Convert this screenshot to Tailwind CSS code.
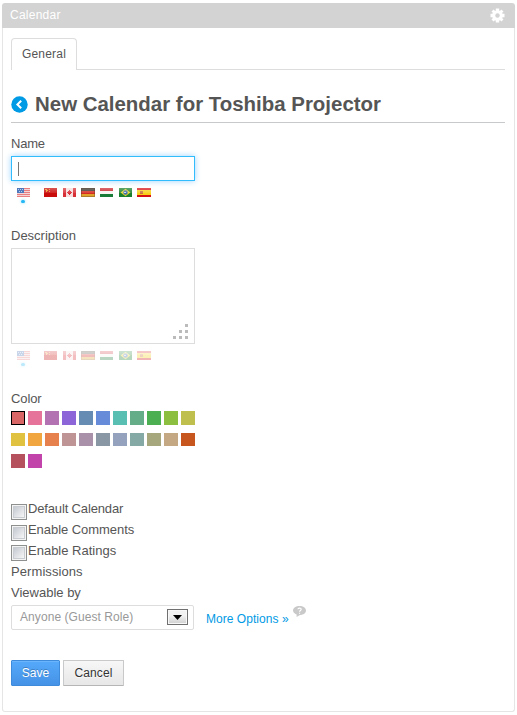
<!DOCTYPE html>
<html lang="en">
<head>
<meta charset="utf-8">
<title>Calendar</title>
<script src="https://cdn.jsdelivr.net/npm/@tailwindcss/browser@4"></script>
</head>
<body class="bg-white font-['Liberation_Sans',Arial,sans-serif] text-[13px] text-[#555]">
<svg width="0" height="0" class="absolute">
  <defs>
    <linearGradient id="gloss" x1="0" y1="0" x2="0" y2="1"><stop offset="0" stop-color="#fff" stop-opacity=".3"/><stop offset=".5" stop-color="#fff" stop-opacity=".12"/><stop offset=".5" stop-color="#fff" stop-opacity="0"/></linearGradient>
    <symbol id="us" viewBox="0 0 13 9"><path fill="#f4d6d8" d="M0 0h13v9H0z"/><path fill="#e87e80" d="M0 0h13v1H0zM0 2h13v1H0zM0 4h13v1H0zM0 6h13v1H0zM0 8h13v1H0z"/><path fill="#5079bd" d="M0 0h7v5H0z"/><path fill="#b9cfee" d="M1 1h1v1H1zM3 1h1v1H3zM5 1h1v1H5zM2 3h1v1H2zM4 3h1v1H4z"/></symbol>
    <symbol id="cn" viewBox="0 0 13 9"><path fill="#c90b09" d="M0 0h13v9H0z"/><path fill="#f0931d" d="M1 1h2v1h1v1H3v1H2V2H1zM5 1h1v1H5zM5 3h1v1H5z"/><path fill="url(#gloss)" d="M0 0h13v9H0z"/></symbol>
    <symbol id="ca" viewBox="0 0 13 9"><path fill="#f6dede" d="M0 0h13v9H0z"/><path fill="#d82e36" d="M0 0h3v9H0zM10 0h3v9h-3zM6 2h1v1h1v1h1v1H8v1H7v1H6V6H5V5H4V4h1V3h1z"/><path fill="url(#gloss)" d="M0 0h13v9H0z"/></symbol>
    <symbol id="de" viewBox="0 0 14 9"><path fill="#3a3429" d="M0 0h14v3H0z"/><path fill="#d52b20" d="M0 3h14v3H0z"/><path fill="#dfa32b" d="M0 6h14v3H0z"/><path fill="url(#gloss)" d="M0 0h14v9H0z"/><path fill="none" stroke="#54382b" stroke-opacity=".35" d="M.5.5h13v8H.5z"/></symbol>
    <symbol id="hu" viewBox="0 0 13 9"><path fill="#c9252c" d="M0 0h13v3H0z"/><path fill="#f5f5f1" d="M0 3h13v3H0z"/><path fill="#187b37" d="M0 6h13v3H0z"/><path fill="url(#gloss)" d="M0 0h13v9H0z"/></symbol>
    <symbol id="br" viewBox="0 0 13 9"><path fill="#197e2d" d="M0 0h13v9H0z"/><path fill="#e2d22c" d="m6.500.8 5 3.700-5 3.700-5-3.700z"/><circle cx="6.500" cy="4.500" r="2.200" fill="#3f6eae"/><path fill="#c1d7e8" d="M5 4h2v1H5z"/><path fill="url(#gloss)" d="M0 0h13v9H0z"/></symbol>
    <symbol id="es" viewBox="0 0 14 9"><path fill="#d60f12" d="M0 0h14v9H0z"/><path fill="#f8ce1b" d="M0 2h14v5H0z"/><path fill="#c9703c" d="M3 3h3v3H3z"/><path fill="url(#gloss)" d="M0 0h14v9H0z"/></symbol>
  </defs>
</svg>
<div class="ml-[2px] flex h-[712px] w-[513px] flex-col pt-[3px]">
  <header class="flex h-[25px] shrink-0 items-center justify-between rounded-t-[3px] bg-[#d3d3d3] pr-[10px] pl-[8px] text-white">
    <span class="text-[12px] leading-[25px] tracking-[0.25px]">Calendar</span>
    <svg width="15" height="15" viewBox="-7.500 -7.500 15 15">
      <g fill="#fff"><circle r="5.300"/><path d="M-1.700-7h3.400v14h-3.400zM-7-1.700H7v3.400H-7z"/><path transform="rotate(45)" d="M-1.500-7h3v14h-3zM-7-1.500H7v3H-7z"/></g><circle r="2.200" fill="#d3d3d3"/>
    </svg>
  </header>
  <main class="flex flex-1 flex-col rounded-b-[3px] border border-t-0 border-[#e5e5e5] pr-[9px] pl-[8px]">
    <nav class="mt-[10px] flex h-[32px] shrink-0">
      <a class="w-[66px] rounded-t-[4px] border border-b-0 border-[#ddd] text-center text-[12px] leading-[30px] tracking-[0.2px]">General</a>
      <span class="flex-1 border-b border-[#ddd]"></span>
    </nav>
    <div class="mt-[16px] flex h-[37px] shrink-0 items-center border-b border-[#c8c9ca]">
      <svg width="17" height="17" viewBox="0 0 17 17"><circle cx="8.500" cy="8.500" r="8.200" fill="#009ae5"/><path d="M10.200 4.700 6.400 8.500l3.800 3.800" fill="none" stroke="#fff" stroke-width="2"/></svg>
      <h1 class="ml-[7px] text-[20.45px] leading-[36px] font-bold whitespace-nowrap">New Calendar for Toshiba Projector</h1>
    </div>
    <label class="mt-[11px] leading-[20px] tracking-[-0.2px]">Name</label>
    <div class="mt-[2px] flex h-[25px] w-[184px] shrink-0 items-center border border-[#31bcfd] bg-white pl-[6px] shadow-[0_0_6px_#9bd4ff]"><span class="h-[14px] w-px bg-[#777]"></span></div>
    <div class="mt-[7px] h-[17px] shrink-0 pl-[6px]">
      <div class="flex h-[9px]">
        <svg class="mr-[14px]" width="13" height="9"><use href="#us"/></svg><svg class="mr-[6px]" width="13" height="9"><use href="#cn"/></svg><svg class="mr-[5px]" width="13" height="9"><use href="#ca"/></svg><svg class="mr-[5px]" width="14" height="9"><use href="#de"/></svg><svg class="mr-[6px]" width="13" height="9"><use href="#hu"/></svg><svg class="mr-[5px]" width="13" height="9"><use href="#br"/></svg><svg width="14" height="9"><use href="#es"/></svg>
      </div>
      <div class="mt-[3px] ml-[4px] h-[3px] w-[4px] rounded-full bg-[#26b8f5] shadow-[0_0_3px_#7edaff]"></div>
    </div>
    <label class="mt-[21px] leading-[20px]">Description</label>
    <div class="mt-[2px] flex h-[96px] w-[184px] shrink-0 items-end justify-end border border-[#ddd] bg-white pr-[6px] pb-[4px]">
      <svg width="15" height="15" fill="#bbb"><path d="M12 0h3v3h-3zM6 6h3v3H6zM12 6h3v3h-3zM0 12h3v3H0zM6 12h3v3H6zM12 12h3v3h-3z"/></svg>
    </div>
    <div class="mt-[7px] h-[17px] shrink-0 pl-[6px] opacity-30">
      <div class="flex h-[9px]">
        <svg class="mr-[14px]" width="13" height="9"><use href="#us"/></svg><svg class="mr-[6px]" width="13" height="9"><use href="#cn"/></svg><svg class="mr-[5px]" width="13" height="9"><use href="#ca"/></svg><svg class="mr-[5px]" width="14" height="9"><use href="#de"/></svg><svg class="mr-[6px]" width="13" height="9"><use href="#hu"/></svg><svg class="mr-[5px]" width="13" height="9"><use href="#br"/></svg><svg width="14" height="9"><use href="#es"/></svg>
      </div>
      <div class="mt-[3px] ml-[4px] h-[3px] w-[4px] rounded-full bg-[#26b8f5] shadow-[0_0_3px_#7edaff]"></div>
    </div>
    <label class="mt-[21px] leading-[20px] tracking-[-0.1px]">Color</label>
    <div class="mt-[2px] flex gap-[3px]">
      <i class="size-[14px] border border-black bg-[#d96666]"></i><i class="size-[14px] bg-[#e67399]"></i><i class="size-[14px] bg-[#b373b3]"></i><i class="size-[14px] bg-[#8c66d9]"></i><i class="size-[14px] bg-[#668cb3]"></i><i class="size-[14px] bg-[#668cd9]"></i><i class="size-[14px] bg-[#59bfb3]"></i><i class="size-[14px] bg-[#65ad89]"></i><i class="size-[14px] bg-[#4cb052]"></i><i class="size-[14px] bg-[#8cbf40]"></i><i class="size-[14px] bg-[#bfbf4d]"></i>
    </div>
    <div class="mt-[8px] flex gap-[3px]">
      <i class="h-[13px] w-[14px] bg-[#e0c240]"></i><i class="h-[13px] w-[14px] bg-[#f2a640]"></i><i class="h-[13px] w-[14px] bg-[#e6804d]"></i><i class="h-[13px] w-[14px] bg-[#be9494]"></i><i class="h-[13px] w-[14px] bg-[#a992a9]"></i><i class="h-[13px] w-[14px] bg-[#8997a5]"></i><i class="h-[13px] w-[14px] bg-[#94a2be]"></i><i class="h-[13px] w-[14px] bg-[#85aaa5]"></i><i class="h-[13px] w-[14px] bg-[#a7a77d]"></i><i class="h-[13px] w-[14px] bg-[#c4a883]"></i><i class="h-[13px] w-[14px] bg-[#c7561e]"></i>
    </div>
    <div class="mt-[8px] flex gap-[3px]">
      <i class="size-[14px] bg-[#b5515d]"></i><i class="size-[14px] bg-[#c244ab]"></i>
    </div>
    <div class="mt-[31px] flex h-[21px] leading-[20px] tracking-[-0.15px]"><i class="mt-[5px] mr-px size-[16px] border border-[#8e8f8f] bg-[#f4f4f4] p-px"><b class="block size-full border border-[#c9cdd1] bg-linear-to-br from-[#c5cad2] to-[#f6f6f6]"></b></i>Default Calendar</div>
    <div class="flex h-[21px] leading-[20px] tracking-[-0.05px]"><i class="mt-[5px] mr-px size-[16px] border border-[#8e8f8f] bg-[#f4f4f4] p-px"><b class="block size-full border border-[#c9cdd1] bg-linear-to-br from-[#c5cad2] to-[#f6f6f6]"></b></i>Enable Comments</div>
    <div class="flex h-[21px] leading-[20px]"><i class="mt-[4px] mr-px size-[16px] border border-[#8e8f8f] bg-[#f4f4f4] p-px"><b class="block size-full border border-[#c9cdd1] bg-linear-to-br from-[#c5cad2] to-[#f6f6f6]"></b></i>Enable Ratings</div>
    <div class="h-[21px] leading-[20px] tracking-[0.08px]">Permissions</div>
    <div class="h-[22px] leading-[20px]">Viewable by</div>
    <div class="flex h-[25px] items-start">
      <div class="flex h-[25px] w-[183px] items-center justify-between rounded-[2px] border border-[#ddd] pr-[5px] pl-[8px] text-[#999]">
        <span class="text-[12px] leading-[23px] tracking-[0.07px]">Anyone (Guest Role)</span>
        <span class="mb-[1px] flex h-[16px] w-[21px] items-center justify-center border border-[#707070] bg-linear-to-b from-[#f2f2f2] from-40% to-[#cfcfcf] shadow-[inset_0_0_0_1px_#f8f8f8]"><svg width="9" height="5"><path d="M0 0h9L4.500 5z" fill="#000"/></svg></span>
      </div>
      <a class="mt-[4px] ml-[12px] text-[12px] leading-[20px] tracking-[0.04px] text-[#009ae5]">More Options »</a>
      <svg class="mt-[1px] ml-[4px]" width="13" height="12" viewBox="0 0 13 12"><path fill="#c9c9c9" d="M6.500 0C10.200 0 13 2 13 4.600S10.400 9 7 9.100L3.600 11V8.500C1.400 7.800 0 6.400 0 4.600 0 2 2.900 0 6.500 0z"/><path d="M4.900 3.300c.2-1.700 3.400-1.600 3.300 0C8.200 4.500 6.600 4.300 6.600 5.700M6.600 6.700v1.100" fill="none" stroke="#fff" stroke-width="1.200"/></svg>
    </div>
    <div class="mt-[30px] flex gap-[3px]">
      <button class="h-[26px] w-[49px] rounded-[1px] border border-[#3e8bdb] bg-linear-to-b from-[#55a9fb] to-[#4592e7] text-[12px] leading-[24px] text-white shadow-[inset_0_1px_0_#6bb5fc] text-shadow-[0_-1px_0_#0000003f]">Save</button>
      <button class="h-[26px] w-[61px] rounded-[1px] border border-[#c8c9ca] border-b-[#b5b5b5] bg-linear-to-b from-[#f7f7f7] to-[#e7e7e7] text-[12px] leading-[24px] tracking-[0.1px] text-[#333] text-shadow-[0_1px_1px_#ffffffbf]">Cancel</button>
    </div>
  </main>
</div>
</body>
</html>
